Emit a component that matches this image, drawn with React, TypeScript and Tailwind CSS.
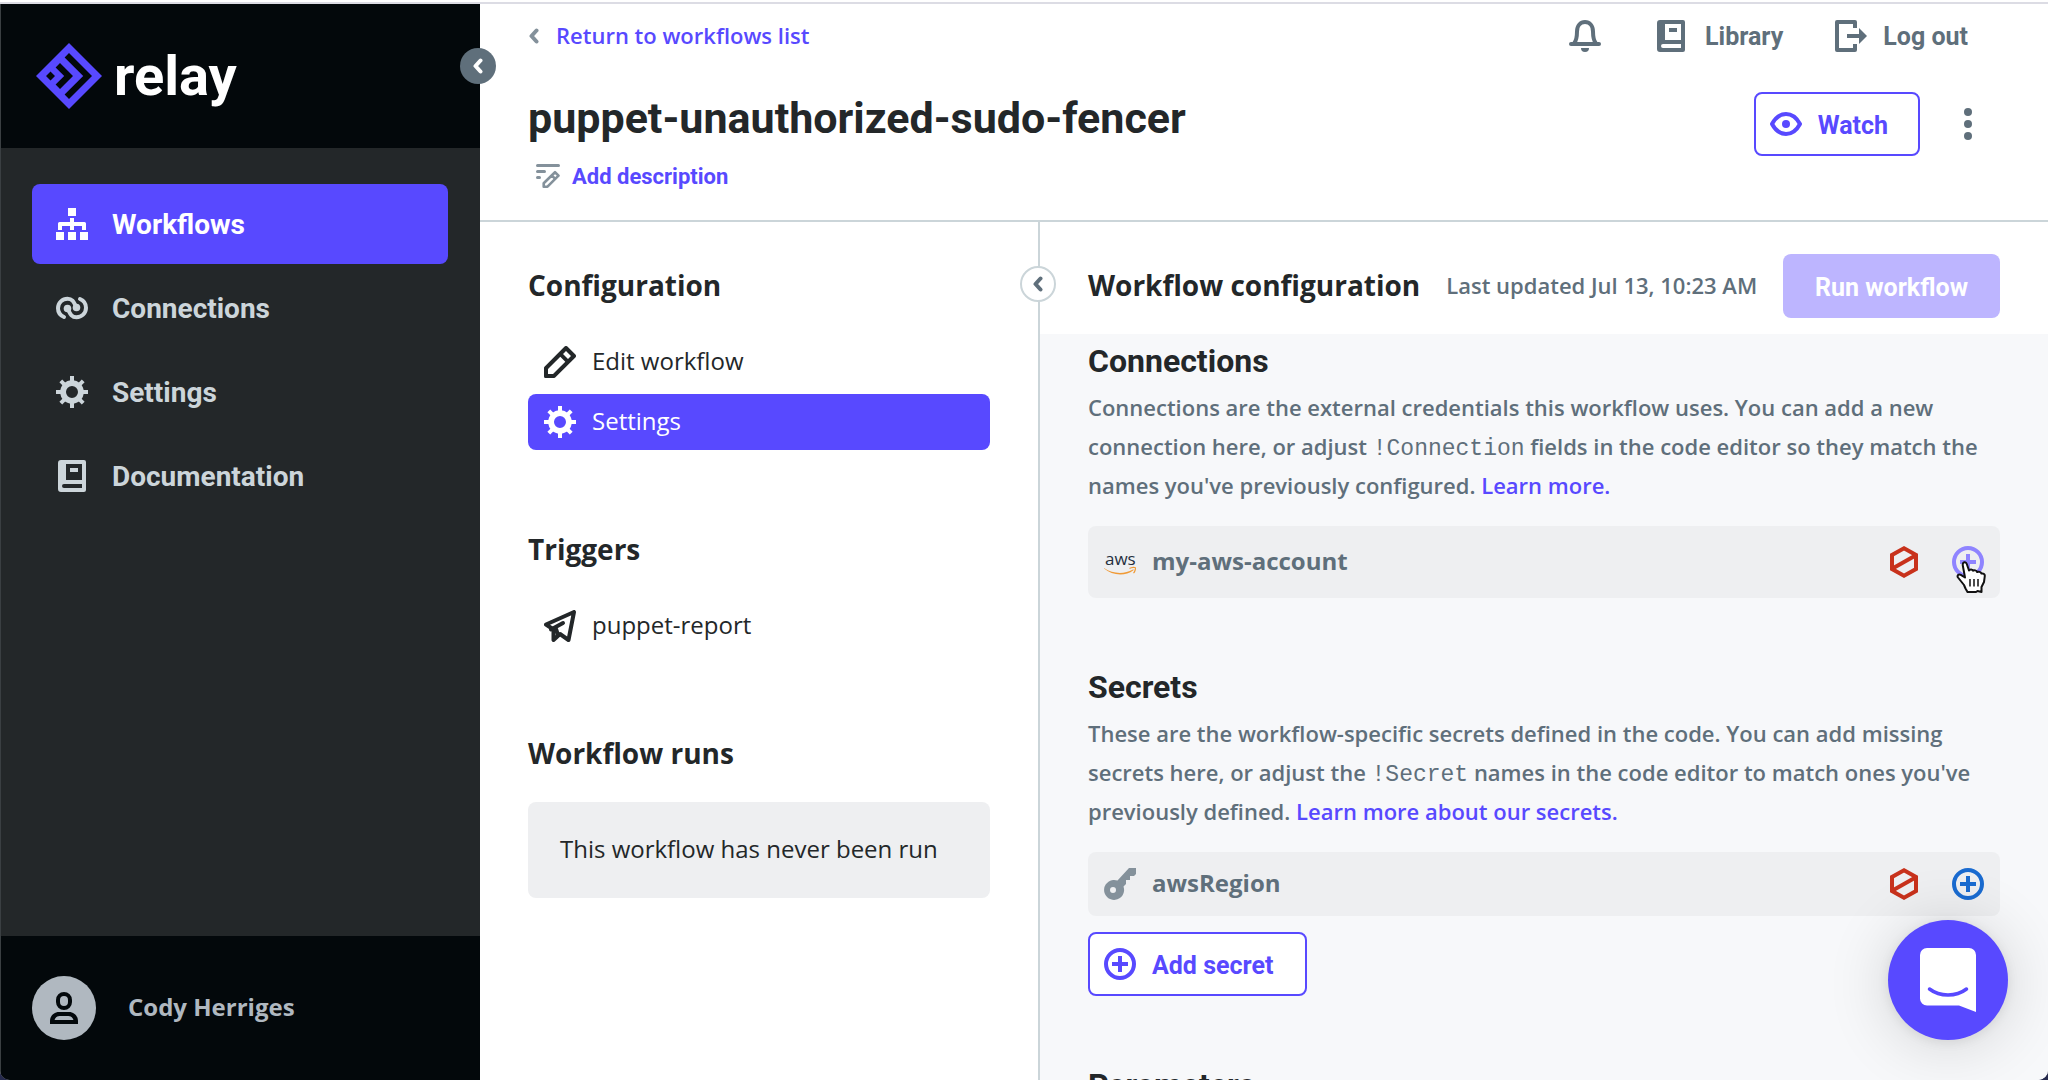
import type { ReactNode } from "react";

type IconProps = { className?: string };

function Svg({ className = "size-8", box = "0 0 32 32", children }: { className?: string; box?: string; children: ReactNode }) {
  return (
    <svg viewBox={box} className={`shrink-0 ${className}`} fill="none" aria-hidden="true">
      {children}
    </svg>
  );
}

function RelayMark() {
  return (
    <Svg className="size-[66px]" box="0 0 66 66">
      <path
        fill="#5849ff"
        fillRule="evenodd"
        d="M33 0 66 33 33 66 0 33ZM14.5 28.5 10 33l4.5 4.5L19 33ZM24 20l-4.4 4.4 8.6 8.6-8.6 8.6L24 46l13-13ZM33 10l-4.4 4.4L47.200 33 28.600 51.600 33 56l23-23Z"
      />
    </Svg>
  );
}

function SitemapIcon() {
  return (
    <Svg>
      <path
        fill="currentColor"
        d="M12 0h8v8h-8zM0 24h8v8H0zM12 24h8v8h-8zM24 24h8v8h-8zM14 10h4v4h10.500a1.500 1.500 0 0 1 1.500 1.500V22h-4v-4h-8v4h-4v-4H6v4H2v-6.500A1.500 1.500 0 0 1 3.500 14H14z"
      />
    </Svg>
  );
}

function LinkIcon() {
  return (
    <Svg>
      <g stroke="currentColor" strokeWidth="4" strokeLinecap="round">
        <path d="M8 25C4.500 23.500 2 20.500 2 16.300 2 10.500 6.500 6.800 11.500 6.800c5.500 0 6.500 4 9 8.700" />
        <path d="M24 7c3.500 1.500 6 4.500 6 8.700 0 5.800-4.500 9.500-9.500 9.500-5.500 0-6.500-4-9-8.700" />
      </g>
      <circle cx="20.500" cy="15.500" r="3.800" fill="currentColor" />
      <circle cx="11.500" cy="16.500" r="3.800" fill="currentColor" />
    </Svg>
  );
}

function GearIcon() {
  return (
    <Svg>
      <circle cx="16" cy="16" r="8.900" stroke="currentColor" strokeWidth="5.800" />
      <path
        stroke="currentColor"
        strokeWidth="4"
        d="M16 0v6M16 26v6M0 16h6M26 16h6M4.800 4.800l4 4M23.200 23.200l4 4M4.800 27.200l4-4M23.200 8.800l4-4"
      />
    </Svg>
  );
}

function BookIcon() {
  return (
    <Svg className="h-8 w-7" box="2 0 28 32">
      <path
        fill="currentColor"
        fillRule="evenodd"
        d="M5 0h23a2 2 0 0 1 2 2v28a2 2 0 0 1-2 2H5a3 3 0 0 1-3-3V3a3 3 0 0 1 3-3Zm5 4v16h16V4ZM8 24a2 2 0 0 0 0 4h18v-4Z"
      />
      <path fill="currentColor" d="M14 8h8v4h-8z" />
    </Svg>
  );
}

function UserIcon() {
  return (
    <Svg>
      <rect x="10" y="2" width="12" height="14" rx="6" stroke="currentColor" strokeWidth="4" />
      <path
        fill="currentColor"
        fillRule="evenodd"
        d="M2 32v-3c0-5 4-9 9-9h10c5 0 9 4 9 9v3ZM6.500 28h19c-1-2.600-2.500-4-5-4h-9c-2.500 0-4 1.400-5 4Z"
      />
    </Svg>
  );
}

function ChevronLeft({ className = "h-4 w-3" }: IconProps) {
  return (
    <Svg className={className} box="0 0 12 16">
      <path d="M8.500 2.500 3.500 8l5 5.500" stroke="currentColor" strokeWidth="4" strokeLinecap="round" strokeLinejoin="round" />
    </Svg>
  );
}

function BellIcon() {
  return (
    <Svg>
      <path d="M5 23.500C7.600 20.500 8 17 8 11.500 8 5.500 11.500 2 16 2s8 3.500 8 9.500c0 5.500.400 9 3 12" stroke="currentColor" strokeWidth="4" />
      <path d="M2 24h28" stroke="currentColor" strokeWidth="4" strokeLinecap="round" />
      <path d="M12 28h8a4 4 0 0 1-8 0Z" fill="currentColor" />
    </Svg>
  );
}

function LogoutIcon() {
  return (
    <Svg>
      <path d="M20 8V2H2v28h18v-6" stroke="currentColor" strokeWidth="4" strokeLinejoin="round" />
      <path d="M12 14h12V8l8 8-8 8v-6H12z" fill="currentColor" />
    </Svg>
  );
}

function EyeIcon() {
  return (
    <Svg>
      <path d="M2 16c3.500-6.500 8.500-10 14-10s10.500 3.500 14 10c-3.500 6.500-8.500 10-14 10S5.500 22.500 2 16Z" stroke="currentColor" strokeWidth="4" strokeLinejoin="round" />
      <circle cx="16" cy="16" r="4" fill="currentColor" />
    </Svg>
  );
}

function DotsIcon() {
  return (
    <Svg className="h-8 w-2" box="0 0 8 32">
      <g fill="currentColor">
        <circle cx="4" cy="4" r="4" />
        <circle cx="4" cy="16" r="4" />
        <circle cx="4" cy="28" r="4" />
      </g>
    </Svg>
  );
}

function EditNoteIcon() {
  return (
    <Svg className="size-6" box="0 0 24 24">
      <path d="M1.500 1.500h21M1.500 7.500h7M1.500 13.500h2" stroke="currentColor" strokeWidth="3" strokeLinecap="round" />
      <path
        d="M19 8.200 22.500 11.700 11.500 22.700H7.700V19.300ZM15.800 11.500l3.400 3.400"
        stroke="currentColor"
        strokeWidth="2.600"
        strokeLinejoin="round"
      />
    </Svg>
  );
}

function PencilIcon() {
  return (
    <Svg>
      <path
        fill="currentColor"
        fillRule="evenodd"
        d="M20.600.600a2 2 0 0 1 2.800 0l8 8a2 2 0 0 1 0 2.800L11.200 31.500a1.500 1.500 0 0 1-1 .5H1.500A1.500 1.500 0 0 1 0 30.500v-8.700a1.500 1.500 0 0 1 .500-1ZM22 5l-3 3 5 5 3-3ZM16.300 10.700 4 23v5h5l12.300-12.300Z"
      />
    </Svg>
  );
}

function SendIcon() {
  return (
    <Svg>
      <path
        d="M2 14.500 30 2l-5.500 28-8.500-6-6.500 6V19.500Z"
        stroke="currentColor"
        strokeWidth="4"
        strokeLinejoin="round"
      />
      <path d="M7 19.500 19 13M12 19l2 6" stroke="currentColor" strokeWidth="4" strokeLinecap="round" />
    </Svg>
  );
}

function KeyIcon() {
  return (
    <Svg>
      <path
        fill="currentColor"
        fillRule="evenodd"
        d="M25 0h7v6l-2 2h-4v4h-4v4l-2.500 2.500A10 10 0 1 1 13.500 12.500ZM9 19a3 3 0 1 0 0 6 3 3 0 0 0 0-6Z"
      />
    </Svg>
  );
}

function AwsIcon() {
  return (
    <Svg>
      <text x="1" y="19" fontSize="17" fontWeight="400" fontFamily="Open Sans, sans-serif" fill="#252f3e">
        aws
      </text>
      <path d="M0 22c9 6 20 6.500 29 1.500.800-.400 1 .300.400.800C21 30.800 8 29.500 0 22.600Z" fill="#f09a36" />
      <path d="M25.500 22.600c2.500-1.600 5.500-1.200 5.800-.900.400.500-.100 3.800-1.800 5.500" stroke="#f09a36" strokeWidth="1.200" />
    </Svg>
  );
}

function HexSlashIcon() {
  return (
    <Svg className="h-8 w-7" box="0 0 28 32">
      <path d="M14 2.300 26 9v14l-12 6.700L2 23V9ZM2.500 22.500 25.500 9.500" stroke="currentColor" strokeWidth="4" />
    </Svg>
  );
}

function PlusCircleIcon() {
  return (
    <Svg>
      <circle cx="16" cy="16" r="14" stroke="currentColor" strokeWidth="4" />
      <path d="M16 8v16M8 16h16" stroke="currentColor" strokeWidth="4" />
    </Svg>
  );
}

function HandPointer({ className }: IconProps) {
  return (
    <Svg className={className} box="0 0 30 34">
      <path
        d="M9.500 28.500 8 25 2 17.500c-1.200-1.800.500-3.800 2.800-2.700L9 17.500 6.800 5.500C6.200 2 9.800 1 10.800 4L13 10.500c1-1.700 3.500-1.200 4 .3 1.200-1 3.500-.5 4 1.200 1.500-.7 3.800-.2 4.500 1.500 2-.5 3.500.8 3.300 2.500L28 22l-2.500 5v5l-4-1-1.500 1h-8.500Z"
        fill="#fff"
        stroke="#111"
        strokeWidth="2"
        strokeLinejoin="round"
      />
      <path d="M14 19v7.500M18 19v7.500M22 19v7.500" stroke="#111" strokeWidth="1.500" />
    </Svg>
  );
}

function ChatIcon() {
  return (
    <Svg className="h-16 w-14" box="0 0 56 64">
      <path d="M7 0h42a7 7 0 0 1 7 7v57l-17-6.500H7a7 7 0 0 1-7-7V7a7 7 0 0 1 7-7Z" fill="#fff" />
      <path d="M9.500 41c10.500 8 26.500 8 37 0" stroke="#5849ff" strokeWidth="3.500" strokeLinecap="round" />
    </Svg>
  );
}

const navItems = [
  { label: "Workflows", icon: <SitemapIcon />, active: true },
  { label: "Connections", icon: <LinkIcon />, active: false },
  { label: "Settings", icon: <GearIcon />, active: false },
  { label: "Documentation", icon: <BookIcon />, active: false },
];

function Sidebar() {
  return (
    <aside className="relative flex w-[480px] shrink-0 flex-col border-l border-[#3a3f42] bg-[#232729]">
      <div className="flex h-36 shrink-0 items-center gap-3 bg-[#03080b] pl-[35px]">
        <RelayMark />
        <span className="font-[Roboto] text-[56px] leading-none font-bold text-white">relay</span>
      </div>
      <button
        aria-label="Collapse sidebar"
        className="absolute top-11 -right-4 z-10 flex size-9 items-center justify-center rounded-full bg-[#5f6f7b] text-white"
      >
        <ChevronLeft />
      </button>
      <nav className="flex flex-1 flex-col gap-1 pt-9 pr-8 pl-[31px]">
        {navItems.map((item) => (
          <a
            key={item.label}
            href="#"
            className={`flex h-20 items-center gap-6 rounded-lg px-6 font-[Roboto] text-[28px] font-bold ${
              item.active ? "bg-[#5849ff] text-white" : "text-[#ccd5da]"
            }`}
          >
            <span className="flex w-8 justify-center">{item.icon}</span>
            <span className="pt-0.5">{item.label}</span>
          </a>
        ))}
      </nav>
      <div className="flex h-36 shrink-0 items-center gap-8 bg-[#03080b] pl-[31px] text-2xl font-bold text-[#b0b8c0]">
        <span className="flex size-16 items-center justify-center rounded-full bg-[#b0b8c0] text-[#03080b]">
          <UserIcon />
        </span>
        <span className="pb-0.5">Cody Herriges</span>
      </div>
    </aside>
  );
}

function TopBar() {
  return (
    <header className="flex h-[218px] shrink-0 justify-between border-b-2 border-[#cbd5d9] pr-12 pl-12">
      <div className="flex flex-col items-start pt-3">
        <a href="#" className="flex h-10 items-center gap-4 text-[22px] font-semibold text-[#5849ff]">
          <ChevronLeft className="h-4 w-3 text-[#84919b]" />
          <span className="pb-0.5">Return to workflows list</span>
        </a>
        <h1 className="mt-8 font-[Roboto] text-[43px] leading-[60px] font-bold text-[#232729]">puppet-unauthorized-sudo-fencer</h1>
        <button className="mt-2 flex h-10 items-center gap-3 pl-2 font-[Roboto] text-[22px] font-bold text-[#5849ff]">
          <span className="text-[#84919b]">
            <EditNoteIcon />
          </span>
          Add description
        </button>
      </div>
      <div className="flex flex-col items-end pt-2 font-[Roboto] text-[25px] font-bold text-[#5f6f7b]">
        <div className="flex h-12 items-center gap-[52px] pr-8">
          <button aria-label="Notifications" className="mr-1">
            <BellIcon />
          </button>
          <a href="#" className="flex items-center gap-5">
            <BookIcon />
            <span className="pt-0.5">Library</span>
          </a>
          <a href="#" className="flex items-center gap-4">
            <LogoutIcon />
            <span className="pt-0.5">Log out</span>
          </a>
        </div>
        <div className="mt-8 flex items-center gap-11 pr-7">
          <button className="flex h-16 items-center gap-4 rounded-lg border-2 border-[#5849ff] pr-[30px] pl-3.5 text-[#5849ff]">
            <EyeIcon />
            <span className="pt-1">Watch</span>
          </button>
          <button aria-label="More actions">
            <DotsIcon />
          </button>
        </div>
      </div>
    </header>
  );
}

function PaneTitle({ children }: { children: ReactNode }) {
  return <h2 className="pb-0.5 text-[28px] leading-[38px] font-bold text-[#232729]">{children}</h2>;
}

function PaneLink({ icon, active = false, children }: { icon: ReactNode; active?: boolean; children: ReactNode }) {
  return (
    <a
      href="#"
      className={`flex h-14 items-center gap-4 rounded-lg px-4 text-2xl ${active ? "bg-[#5849ff] text-white" : "text-[#232729]"}`}
    >
      {icon}
      <span className="pb-0.5">{children}</span>
    </a>
  );
}

function ConfigPane() {
  return (
    <section className="relative flex w-[560px] shrink-0 flex-col gap-20 border-r-2 border-[#cbd5d9] pt-11 pr-12 pl-12">
      <button
        aria-label="Collapse panel"
        className="absolute top-11 -right-[18px] z-10 flex size-9 items-center justify-center rounded-full border-2 border-[#cbd5d9] bg-white text-[#5f6f7b]"
      >
        <ChevronLeft />
      </button>
      <div>
        <PaneTitle>Configuration</PaneTitle>
        <div className="mt-7 flex flex-col gap-1">
          <PaneLink icon={<PencilIcon />}>Edit workflow</PaneLink>
          <PaneLink icon={<GearIcon />} active>
            Settings
          </PaneLink>
        </div>
      </div>
      <div>
        <PaneTitle>Triggers</PaneTitle>
        <div className="mt-7">
          <PaneLink icon={<SendIcon />}>puppet-report</PaneLink>
        </div>
      </div>
      <div>
        <PaneTitle>Workflow runs</PaneTitle>
        <p className="mt-7 flex h-24 items-center rounded-lg bg-[#eeeff1] px-8 pb-0.5 text-2xl text-[#232729]">This workflow has never been run</p>
      </div>
    </section>
  );
}

function SectionTitle({ children }: { children: ReactNode }) {
  return <h3 className="font-[Roboto] text-[32px] leading-10 font-bold text-[#232729]">{children}</h3>;
}

function Code({ children }: { children: ReactNode }) {
  return <code className="font-['Liberation_Mono'] text-[23px] leading-none font-normal">{children}</code>;
}

const paragraph = "mt-[7px] mb-[21px] text-[22px] leading-[39px] font-semibold text-[#5f6f7b]";

function SettingsPane() {
  return (
    <main className="flex min-w-0 flex-1 flex-col">
      <div className="flex h-28 shrink-0 items-start bg-white px-12 pt-8">
        <div className="flex h-16 flex-1 items-center gap-[26px]">
          <PaneTitle>Workflow configuration</PaneTitle>
          <span className="pb-0.5 text-[22px] font-semibold whitespace-nowrap text-[#5f6f7b]">Last updated Jul 13, 10:23 AM</span>
        </div>
        <button className="h-16 rounded-lg bg-[#bdb5ff] px-8 pt-1 font-[Roboto] text-[25px] font-bold whitespace-nowrap text-white">
          Run workflow
        </button>
      </div>
      <div className="flex-1 overflow-hidden bg-[#f7f8fa] px-12 pt-[7px]">
        <section>
          <SectionTitle>Connections</SectionTitle>
          <p className={paragraph}>
            Connections are the external credentials this workflow uses. You can add a new connection here, or adjust{" "}
            <Code>!Connection</Code> fields in the code editor so they match the names you've previously configured.{" "}
            <a href="#" className="text-[#5849ff]">
              Learn more.
            </a>
          </p>
          <div className="flex h-[72px] items-center gap-4 rounded-lg bg-[#eeeff1] px-4 text-2xl font-bold text-[#5f6f7b]">
            <AwsIcon />
            <span className="flex-1 pb-0.5">my-aws-account</span>
            <span className="text-[#c8321c]">
              <HexSlashIcon />
            </span>
            <button aria-label="Add my-aws-account" className="relative ml-[18px] text-[#8f84ff]">
              <PlusCircleIcon />
              <HandPointer className="absolute top-3.5 left-1 h-[34px] w-[30px]" />
            </button>
          </div>
        </section>
        <section className="mt-[69px]">
          <SectionTitle>Secrets</SectionTitle>
          <p className={paragraph}>
            These are the workflow-specific secrets defined in the code. You can add missing secrets here, or adjust the{" "}
            <Code>!Secret</Code> names in the code editor to match ones you've previously defined.{" "}
            <a href="#" className="text-[#5849ff]">
              Learn more about our secrets.
            </a>
          </p>
          <div className="flex h-16 items-center gap-4 rounded-lg bg-[#eeeff1] px-4 text-2xl font-bold text-[#5f6f7b]">
            <span className="text-[#84919b]">
              <KeyIcon />
            </span>
            <span className="flex-1 pb-0.5">awsRegion</span>
            <span className="text-[#c8321c]">
              <HexSlashIcon />
            </span>
            <button aria-label="Add awsRegion" className="ml-[18px] text-[#1a6bd0]">
              <PlusCircleIcon />
            </button>
          </div>
          <button className="mt-4 flex h-16 items-center gap-4 rounded-lg border-2 border-[#5849ff] bg-white pr-8 pl-3.5 font-[Roboto] text-[25px] font-bold text-[#5849ff]">
            <PlusCircleIcon />
            <span className="pt-1">Add secret</span>
          </button>
        </section>
        <section className="mt-[69px]">
          <SectionTitle>Parameters</SectionTitle>
        </section>
      </div>
    </main>
  );
}

export default function App() {
  return (
    <div className="h-screen bg-[#262a4d] font-['Open_Sans',sans-serif]">
      <div className="relative flex h-full flex-col overflow-hidden rounded-b-[10px] bg-white">
        <div className="h-1 shrink-0 border-b-2 border-[#dcdce4]" />
        <div className="flex min-h-0 flex-1">
          <Sidebar />
          <div className="flex min-w-0 flex-1 flex-col">
            <TopBar />
            <div className="flex min-h-0 flex-1">
              <ConfigPane />
              <SettingsPane />
            </div>
          </div>
        </div>
        <button
          aria-label="Open chat"
          className="absolute right-10 bottom-10 flex size-[120px] items-center justify-center rounded-full bg-[#5849ff] shadow-[0_2px_12px_rgba(0,0,0,0.08),0_4px_64px_rgba(0,0,0,0.16)]"
        >
          <ChatIcon />
        </button>
      </div>
    </div>
  );
}
